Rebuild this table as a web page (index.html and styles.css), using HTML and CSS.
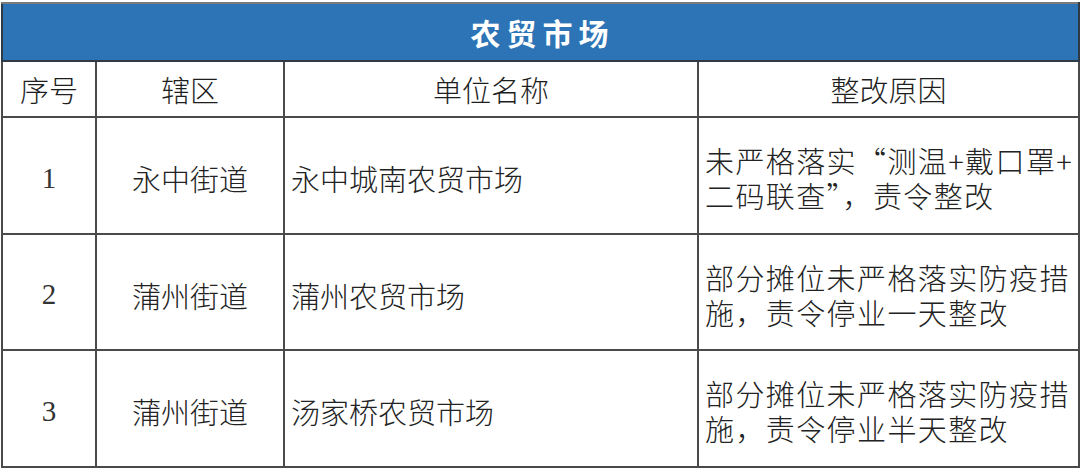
FILE: index.html
```html
<!DOCTYPE html>
<html lang="zh">
<head>
<meta charset="utf-8">
<title>农贸市场</title>
<link rel="stylesheet" href="styles.css">
</head>
<body>
<table class="sheet">
  <colgroup>
    <col class="c-no">
    <col class="c-area">
    <col class="c-name">
    <col class="c-reason">
  </colgroup>
  <thead>
    <tr class="title-row"><th colspan="4">农贸市场</th></tr>
    <tr class="head-row">
      <th>序号</th>
      <th>辖区</th>
      <th>单位名称</th>
      <th>整改原因</th>
    </tr>
  </thead>
  <tbody>
    <tr class="data-row">
      <td class="num">1</td>
      <td class="center">永中街道</td>
      <td class="left">永中城南农贸市场</td>
      <td class="left reason"><div class="line">未严格落实“测温+戴口罩+</div><div class="line">二码联查”，责令整改</div></td>
    </tr>
    <tr class="data-row">
      <td class="num">2</td>
      <td class="center">蒲州街道</td>
      <td class="left">蒲州农贸市场</td>
      <td class="left reason"><div class="line">部分摊位未严格落实防疫措</div><div class="line">施，责令停业一天整改</div></td>
    </tr>
    <tr class="data-row">
      <td class="num">3</td>
      <td class="center">蒲州街道</td>
      <td class="left">汤家桥农贸市场</td>
      <td class="left reason"><div class="line">部分摊位未严格落实防疫措</div><div class="line">施，责令停业半天整改</div></td>
    </tr>
  </tbody>
</table>
</body>
</html>
```
FILE: styles.css
```css
html, body {
  margin: 0;
  padding: 0;
  background: #ffffff;
}
body {
  padding: 2px 0 0 1px;
  font-family: "Liberation Serif", "Noto Sans CJK SC", serif;
  color: #222222;
}
.sheet {
  border-collapse: collapse;
  table-layout: fixed;
  width: 1077px;
  border: 2px solid #7a7a7a;
}
.c-no { width: 94px; }
.c-area { width: 188px; }
.c-name { width: 414px; }
.c-reason { width: 381px; }
.sheet th, .sheet td {
  border: 2px solid #4a4a4a;
  padding: 0;
  font-weight: 300;
  font-size: 29px;
  vertical-align: middle;
}
.title-row th {
  background: #2c74b5;
  color: #ffffff;
  font-family: "Noto Sans CJK SC", sans-serif;
  font-weight: 700;
  font-size: 30px;
  letter-spacing: 6px;
  height: 56px;
  text-align: center;
  border-color: #2f3a44;
  border-top-color: #7a7a7a;
  padding-left: 4px;
}
.head-row th {
  height: 54px;
  text-align: center;
  font-family: "Noto Sans CJK SC", sans-serif;
  font-weight: 300;
  color: #1e1e1e;
}
.data-row td {
  height: 108.5px;
}
.num {
  text-align: center;
  font-family: "Liberation Serif", serif;
  font-size: 29px;
  color: #333333;
  padding-top: 6px !important;
}
.center {
  text-align: center;
  font-family: "Noto Sans CJK SC", sans-serif;
  padding-top: 6px !important;
}
.left {
  text-align: left;
  padding-left: 6px !important;
  padding-top: 6px !important;
  font-family: "Noto Sans CJK SC", sans-serif;
}
.reason {
  letter-spacing: 1.4px;
  white-space: nowrap;
}
.line {
  line-height: 35px;
  height: 35px;
}
```
